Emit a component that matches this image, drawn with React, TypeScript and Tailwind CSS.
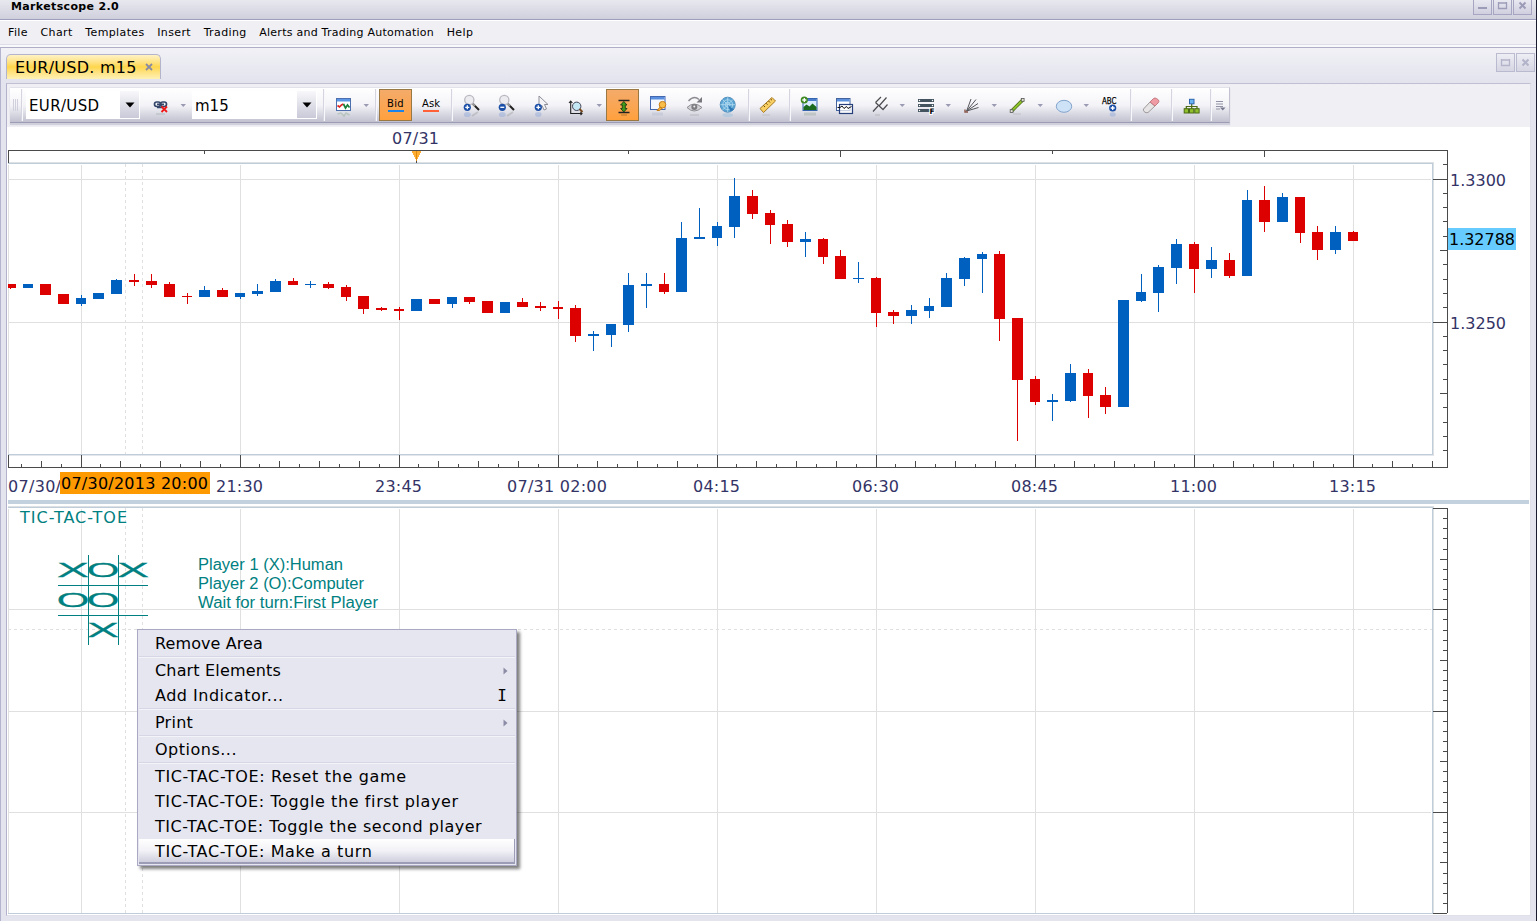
import type { ReactNode } from "react";
import clsx from "clsx";

const DARK = "#4a4a4a";
const GRID = "#e0e0e0";
const FRAME = "#bfcddb";
const LABEL = "#333366";
const UP = "#0060c0";
const DOWN = "#dc0000";
const TEAL = "#008080";

// [direction, high, body top, body bottom, low]
type Candle = [1 | -1, number, number, number, number];

const candles: Candle[] = [
  [-1, 284, 284, 288, 289], [1, 284, 284, 288, 288], [-1, 284, 284, 295, 295], [-1, 294, 294, 304, 304],
  [1, 295, 298, 304, 306], [1, 293, 293, 299, 299], [1, 279, 280, 294, 294], [-1, 274, 280, 282, 286],
  [-1, 274, 281, 285, 288], [-1, 282, 284, 297, 297], [-1, 293, 296, 297, 304], [1, 286, 290, 297, 297],
  [-1, 288, 290, 297, 297], [1, 293, 293, 297, 299], [1, 284, 291, 294, 296], [1, 279, 281, 292, 292],
  [-1, 278, 281, 285, 285], [1, 281, 284, 285, 288], [-1, 282, 284, 288, 289], [-1, 285, 287, 297, 301],
  [-1, 296, 296, 309, 314], [-1, 307, 308, 310, 311], [-1, 307, 309, 311, 320], [1, 299, 299, 311, 311],
  [-1, 299, 299, 304, 304], [1, 297, 297, 304, 308], [-1, 297, 297, 302, 304], [-1, 301, 301, 313, 313],
  [1, 302, 302, 313, 313], [-1, 298, 302, 307, 307], [-1, 302, 306, 308, 311], [-1, 301, 307, 309, 319],
  [-1, 305, 308, 336, 342], [1, 331, 334, 336, 351], [1, 324, 324, 335, 347], [1, 273, 285, 325, 332],
  [1, 273, 284, 286, 308], [-1, 273, 284, 292, 294], [1, 222, 238, 292, 292], [1, 208, 237, 239, 239],
  [1, 222, 226, 238, 246], [1, 178, 196, 227, 238], [-1, 190, 196, 214, 219], [-1, 210, 213, 225, 244],
  [-1, 220, 224, 242, 247], [1, 232, 239, 242, 257], [-1, 238, 239, 257, 264], [-1, 250, 256, 279, 279],
  [1, 262, 278, 279, 283], [-1, 277, 278, 313, 327], [-1, 310, 312, 316, 324], [1, 305, 310, 316, 324],
  [1, 298, 306, 311, 318], [1, 273, 278, 307, 307], [1, 257, 258, 279, 286], [1, 252, 254, 259, 293],
  [-1, 251, 254, 319, 341], [-1, 318, 318, 380, 441], [-1, 376, 379, 402, 405], [1, 394, 400, 402, 421],
  [1, 364, 373, 401, 402], [-1, 369, 373, 396, 418], [-1, 387, 395, 407, 414], [1, 300, 300, 407, 407],
  [1, 274, 292, 301, 302], [1, 265, 267, 293, 312], [1, 239, 244, 268, 284], [-1, 242, 244, 269, 293],
  [1, 247, 260, 269, 278], [-1, 253, 260, 276, 278], [1, 190, 200, 276, 276], [-1, 186, 200, 222, 232],
  [1, 193, 197, 222, 222], [-1, 197, 197, 233, 243], [-1, 226, 232, 250, 260], [1, 226, 232, 250, 254],
  [-1, 231, 232, 241, 241],
];

const gridX = [81, 240, 399, 558, 717, 876, 1035, 1194, 1353];

const timeLabels: [number, string, number][] = [
  [216, "21:30", 47], [375, "23:45", 47], [507, "07/31 02:00", 100], [693, "04:15", 47],
  [852, "06:30", 47], [1011, "08:45", 47], [1170, "11:00", 47], [1329, "13:15", 47],
];

const Px = ({ x, y, w = 1, h = 1, c = DARK }: { x: number; y: number; w?: number; h?: number; c?: string }) => (
  <rect x={x} y={y} width={w} height={h} fill={c} />
);

function CandleShape({ index, data }: { index: number; data: Candle }) {
  const [dir, high, top, bottom, low] = data;
  const thirds = index + 2;
  const center = 81 + ((index - 4) * 53) / 3;
  const x = Math.floor(center + 0.01);
  const c = dir > 0 ? UP : DOWN;
  return (
    <g>
      <Px x={x} y={high} h={low - high} c={c} />
      <Px x={x - 5} y={top} w={thirds % 3 === 0 ? 10 : 11} h={bottom - top} c={c} />
    </g>
  );
}

function PriceChart() {
  const bottomTicks = Array.from({ length: 72 }, (_, i) => i - 3);
  const rightTicks = Array.from({ length: 21 }, (_, i) => i - 1);
  return (
    <g shapeRendering="crispEdges">
      {gridX.map((x) => <Px key={x} x={x} y={165} h={289} c={GRID} />)}
      <Px x={8} y={165} h={289} c={GRID} />
      <Px x={8} y={179} w={1423} c={GRID} />
      <Px x={8} y={322} w={1423} c={GRID} />
      {[125.5, 142.5].map((x) => (
        <line key={x} x1={x} x2={x} y1={164} y2={454} stroke={GRID} strokeDasharray="3 3" />
      ))}

      {/* plot frame */}
      <Px x={8} y={162} w={1426} c="#dde1e4" />
      <Px x={8} y={163} w={1425} c={FRAME} />
      <Px x={1432} y={163} h={292} c={FRAME} />
      <Px x={1433} y={162} h={294} c="#dde1e4" />
      <Px x={8} y={454} w={1425} c={FRAME} />
      <Px x={8} y={455} w={1425} c="#e4e8ec" />

      {/* axes */}
      <Px x={8} y={150} w={1440} />
      <Px x={8} y={150} h={13} />
      <Px x={1447} y={150} h={318} />
      <Px x={8} y={467} w={1440} />
      <Px x={8} y={455} h={13} />
      {[204, 628, 1052].map((x) => <Px key={x} x={x} y={151} h={3} />)}
      {[840, 1264].map((x) => <Px key={x} x={x} y={151} h={6} />)}
      {bottomTicks.map((i) => {
        const h = i % 8 === 0 ? 12 : i % 2 === 0 ? 6 : 3;
        return <Px key={i} x={Math.floor(81 + i * 19.875)} y={467 - h} h={h} />;
      })}
      {rightTicks.map((i) => {
        const w = i % 10 === 0 ? 14 : i % 5 === 0 ? 7 : 4;
        return i === 20 ? null : <Px key={i} x={1447 - w} y={Math.floor(179 + i * 14.3)} w={w} />;
      })}

      <g clipPath="url(#plot)">
        {candles.map((c, i) => <CandleShape key={i} index={i} data={c} />)}
      </g>

      {/* day marker */}
      <path d="M412 151H421V153H420V155H419V157H418V159H417V161H416V159H415V157H414V155H413V153H412Z" fill="#ffae33" />
      <Px x={416} y={151} h={10} c="#e08a10" />
      <Px x={416} y={161} h={2} />

      <g fontSize="16" fill={LABEL}>
        <text x="392" y="144" textLength="47">07/31</text>
        <text x="1450" y="186">1.3300</text>
        <text x="1450" y="329">1.3250</text>
        <text x="8" y="492" textLength="53">07/30/</text>
        {timeLabels.map(([x, t, w]) => <text key={x} x={x} y="492" textLength={w}>{t}</text>)}
      </g>
      <rect x="1448" y="228" width="68" height="22" fill="#66ccff" />
      <text x="1449" y="245" fontSize="16" textLength="66">1.32788</text>
      <rect x="60" y="472" width="150" height="22" fill="#ff9900" />
      <text x="61" y="489" fontSize="16" textLength="147">07/30/2013 20:00</text>
    </g>
  );
}

const Mark = ({ x, y, children }: { x: number; y: number; children: "X" | "O" }) => (
  <text
    transform={`translate(${x} ${y}) scale(${children === "X" ? 2.4 : 2.1} 1)`}
    textAnchor="middle"
    fontSize="20"
    stroke={TEAL}
    strokeWidth=".25"
  >
    {children}
  </text>
);

function GamePane() {
  const ticks = Array.from({ length: 41 }, (_, i) => i);
  return (
    <g>
      <g shapeRendering="crispEdges">
        <rect x="8" y="500" width="1521" height="4" fill="#c3d0de" />
        {gridX.map((x) => <Px key={x} x={x} y={509} h={404} c={GRID} />)}
        <Px x={8} y={509} h={404} c={GRID} />
        {[609, 711, 812].map((y) => <Px key={y} x={8} y={y} w={1423} c={GRID} />)}
        {[125.5, 142.5].map((x) => (
          <line key={x} x1={x} x2={x} y1={508} y2={913} stroke={GRID} strokeDasharray="3 3" />
        ))}
        <line x1={8} x2={1433} y1={629.5} y2={629.5} stroke={GRID} strokeDasharray="3 3" />
        <Px x={8} y={506} w={1426} c="#dde1e4" />
        <Px x={8} y={507} w={1425} c={FRAME} />
        <Px x={1432} y={507} h={406} c={FRAME} />
        <Px x={1433} y={506} h={408} c="#dde1e4" />
        <Px x={8} y={913} w={1425} c={FRAME} />
        <Px x={1447} y={508} h={405} />
        {ticks.map((i) => {
          const w = i % 10 === 0 ? 14 : i % 5 === 0 ? 7 : 4;
          return <Px key={i} x={1447 - w} y={Math.round(508 + i * 10.125)} w={w} />;
        })}
        <Px x={88} y={555} h={90} c={TEAL} />
        <Px x={118} y={555} h={90} c={TEAL} />
        <Px x={58} y={585} w={90} c={TEAL} />
        <Px x={58} y={615} w={90} c={TEAL} />
      </g>
      <g fill={TEAL}>
        <text x="20" y="523" fontSize="16" textLength="107">TIC-TAC-TOE</text>
        <g fontFamily="'Liberation Sans', sans-serif">
          <Mark x={73} y={576.5}>X</Mark>
          <Mark x={103} y={576.5}>O</Mark>
          <Mark x={133} y={576.5}>X</Mark>
          <Mark x={73} y={606.5}>O</Mark>
          <Mark x={103} y={606.5}>O</Mark>
          <Mark x={103} y={636.5}>X</Mark>
          <g fontSize="16">
            <text x="198" y="570" textLength="145" lengthAdjust="spacingAndGlyphs">Player 1 (X):Human</text>
            <text x="198" y="589" textLength="166" lengthAdjust="spacingAndGlyphs">Player 2 (O):Computer</text>
            <text x="198" y="608" textLength="180" lengthAdjust="spacingAndGlyphs">Wait for turn:First Player</text>
          </g>
        </g>
      </g>
    </g>
  );
}

/* ---------- toolbar ---------- */

// every glyph is drawn around x = 0, y runs down the 36px bar
const Glyph = ({ children }: { children: ReactNode }) => (
  <svg width="32" height="36" viewBox="-16 0 32 36" className="shrink-0 overflow-visible">{children}</svg>
);

function Tool({ className, children }: { className?: string; children: ReactNode }) {
  return <div className={clsx("flex h-9 w-8 shrink-0 items-center justify-center", className)}><Glyph>{children}</Glyph></div>;
}

const Arrow = ({ className }: { className?: string }) => (
  <svg width="12" height="36" viewBox="-6 0 12 36" className={clsx("shrink-0", className)}>
    <path d="M-2.5 17H3L.25 20Z" fill="#9a9ab2" />
  </svg>
);

const Sep = ({ className }: { className?: string }) => (
  <div className={clsx("h-8 w-px shrink-0 self-center bg-[#d5d5e0] shadow-[1px_0_0_#f8f8fc]", className)} />
);

const Badge = ({ x, y, minus, color = "#1c50a8" }: { x: number; y: number; minus?: boolean; color?: string }) => (
  <g>
    <circle cx={x} cy={y} r="3.6" fill={color} />
    <path d={minus ? `M${x - 2} ${y}h4` : `M${x - 2} ${y}h4M${x} ${y - 2}v4`} stroke="#fff" strokeWidth="1.3" />
  </g>
);

const Lens = ({ minus }: { minus?: boolean }) => (
  <>
    <circle cx="-2.7" cy="13" r="4.6" fill="#ececf0" stroke="#b8b8c0" strokeWidth="1.3" />
    <path d="M1 17L7 23" stroke="#222" strokeWidth="2" />
    <path d="M1 17L3 19" stroke="#999" strokeWidth="2" />
    <Badge x={-4.7} y={20.3} minus={minus} />
    <ellipse cx="-4.7" cy="27.5" rx="3.4" ry="2.6" fill="#8fa6d6" opacity=".45" />
    <path d="M0 29L6 25" stroke="#888" strokeWidth="2" opacity=".3" />
  </>
);

function Combo({ label, className }: { label: string; className: string }) {
  return (
    <div className={clsx("flex h-7 shrink-0 bg-white text-[15px] leading-[30px]", className)}>
      <span className="grow pl-[3px]">{label}</span>
      <span className="flex w-[20px] items-center justify-center border-r border-b border-white bg-linear-to-b from-[#f8f8fb] to-[#c9c9d8]">
        <svg width="10" height="6"><path d="M.5 .5H9.5L5 5.5Z" /></svg>
      </span>
    </div>
  );
}

function Toolbar() {
  return (
    <div className="ml-[3px] mt-[3px] flex h-9 w-[1220px] items-center border-t border-r border-b border-t-[#e2e2ea] border-r-[#c2c2d0] border-b-[#9c9cb4] bg-linear-to-b from-white via-[#f4f4f8] to-[#c1c1d0] shadow-[0_2px_1px_#d0d0dc]">
      <div className="flex h-8 w-[11px] shrink-0 items-center justify-center gap-px">
        <i className="h-3 w-px bg-[#d0d0dc]" /><i className="h-3 w-px bg-[#d0d0dc]" /><i className="h-3 w-px bg-[#d0d0dc]" />
      </div>
      <Sep />
      <Combo label="EUR/USD" className="ml-[4px] w-[114px] tracking-[0.35px]" />
      <Tool className="ml-[5px]">
        <g fill="none" stroke="#34466a" strokeWidth="1.7">
          <rect x="-6.5" y="15" width="6" height="4.5" rx="2.2" />
          <rect x="-.5" y="15" width="6" height="4.5" rx="2.2" />
          <path d="M-4 17.3H3M-4 20.5H2" />
        </g>
        <path d="M.5 19.5L6 25M6 19.5L.5 25" stroke="#f01818" strokeWidth="1.8" />
        <path d="M-5 27H4" stroke="#9aa" strokeWidth="2" opacity=".3" />
      </Tool>
      <Arrow />
      <Combo label="m15" className="ml-[3px] w-[125px]" />
      <Sep className="ml-[6px]" />
      <Tool className="ml-[4px]">
        <rect x="-7.5" y="11.5" width="14" height="12" fill="#fff" stroke="#4d6fae" />
        <rect x="-7" y="12" width="13" height="2.5" fill="#5c96e6" />
        <path d="M-6.5 18.5L-4.5 20L-2.5 18L-.5 17" fill="none" stroke="#d22" strokeWidth="1.7" />
        <path d="M-.5 17L1.5 21L3.5 18L5.5 20.5" fill="none" stroke="#17803a" strokeWidth="1.7" />
        <path d="M-6.5 27L-3 26L0 29L2 26L5.5 28" fill="none" stroke="#8a8" opacity=".4" strokeWidth="1.5" />
      </Tool>
      <Arrow />
      <Sep className="ml-[3px]" />
      <div className="ml-[3px] flex h-8 w-[33px] shrink-0 flex-col items-center border border-[#9a7844] bg-linear-to-b from-[#f4ab69] to-[#ffa03c] pt-[8px] text-[10px] leading-[12px] tracking-[0.3px]">
        Bid<span className="h-[2px] w-4 shrink-0 bg-[#1b83ea]" />
      </div>
      <div className="ml-[2px] flex h-8 w-[34px] shrink-0 flex-col items-center pt-[9px] text-[10px] leading-[12px]">
        Ask<span className="h-[2px] w-4 shrink-0 bg-[#ff6038]" />
      </div>
      <Sep className="ml-[3px]" />
      <Tool className="ml-[4px]"><Lens /></Tool>
      <Tool className="ml-[3px]"><Lens minus /></Tool>
      <Tool className="ml-[3px]">
        <path d="M-3 9V21L0 18.5L2 23L4.5 22L2.5 17.5H6Z" fill="#f4f4f6" stroke="#8e8e98" />
        <Badge x={-3.7} y={20.3} />
        <ellipse cx="-3.7" cy="27.5" rx="3.2" ry="2.4" fill="#8fa6d6" opacity=".45" />
      </Tool>
      <Tool className="ml-[2px]">
        <path d="M-5.3 14V26.5H6M-7 16L-5.3 14L-3.6 16M4.5 25L6 26.5L4.5 28" fill="none" stroke="#222" strokeWidth="1.1" />
        <circle cx=".7" cy="19.3" r="4.2" fill="#c4e8f4" stroke="#445" />
        <path d="M3.5 22L6.5 25" stroke="#7a4a1e" strokeWidth="2" />
      </Tool>
      <Arrow className="ml-[1px]" />
      <div className="ml-[1px] flex h-8 w-[33px] shrink-0 items-center justify-center border border-[#9a7844] bg-linear-to-b from-[#f4ab69] to-[#ffa03c]">
        <Glyph>
          <path d="M-4.5 13.5H6.5M-4.5 25.5H6.5" stroke="#222" strokeWidth="1.4" />
          <path d="M.8 14.5L4 18H2.3V21.5H4L.8 25L-2.4 21.5H-.7V18H-2.4Z" fill="#3f9a1c" stroke="#1d3c12" strokeWidth=".9" />
          <path d="M-2 28H4" stroke="#a86a20" strokeWidth="2" opacity=".4" />
        </Glyph>
      </div>
      <Tool className="ml-[3px]">
        <rect x="-7.5" y="9.5" width="14.5" height="13" fill="#f4f8ff" stroke="#4468b0" />
        <rect x="-7" y="10" width="13.5" height="2.5" fill="#5a8fe0" />
        <path d="M3.5 18.5L-1 23.5H1.5L5 20.5" fill="#f5b23a" stroke="#c77d15" />
        <circle cx="4.5" cy="17.7" r="3.3" fill="#f9bd49" stroke="#c77d15" />
        <path d="M-6 27H5" stroke="#aab4cc" strokeWidth="3" opacity=".35" />
      </Tool>
      <Tool className="ml-[5px]">
        <path d="M-8 20.5Q-1 13.5 7 20.5Q-1 27.5-8 20.5Z" fill="#d2d2d6" stroke="#8c8c92" />
        <circle cx="-.7" cy="20" r="3" fill="#7c7c82" />
        <circle cx="-.7" cy="19.5" r="1" fill="#eee" />
        <path d="M-6.5 14Q-1 8 4 12.5" fill="none" stroke="#8c8c92" strokeWidth="1.5" />
        <path d="M7 10V15.5H1.5Z" fill="#77777d" />
        <path d="M-5 28H4" stroke="#999" strokeWidth="2" opacity=".25" />
      </Tool>
      <Tool className="ml-[1px]">
        <circle cx="-.3" cy="17.7" r="7.5" fill="#5aa5d4" stroke="#5490bd" />
        <g fill="none" stroke="#b5dcf0" strokeWidth=".8">
          <circle cx="-.3" cy="17.7" r="2.4" /><circle cx="-.3" cy="17.7" r="4.9" />
          <path d="M-7.5 17.7H7M-.3 10.5V25M-5.5 12.5L5 23M5 12.5L-5.5 23" />
        </g>
        <path d="M-.3 17.7L6 22.5L2.5 24.5Z" fill="#2e78b4" />
        <ellipse cx="-.3" cy="28" rx="5.5" ry="2" fill="#8ebddb" opacity=".4" />
      </Tool>
      <Sep className="ml-[4px]" />
      <Tool className="ml-[3px]">
        <path d="M-8 21.5L4 10.5L7.5 14L-4.5 25.5Z" fill="#f7cf62" stroke="#a87a24" />
        <path d="M-4.5 18.5L-3 20M-2 16.2L-.5 17.7M.5 14L2 15.5M2.7 12L4 13.3" stroke="#6b4a12" />
        <path d="M-6 28H2" stroke="#aaa" strokeWidth="2" opacity=".25" />
      </Tool>
      <Sep className="ml-[5px]" />
      <Tool className="ml-[3px]">
        <rect x="-6" y="11.5" width="14" height="12" fill="#d9ecff" stroke="#3564ae" />
        <rect x="-5.5" y="12" width="13" height="2" fill="#4a7dcc" />
        <path d="M-5.5 23V20L-2.5 17.5L.5 19.5L3.5 16.5L7.5 20V23Z" fill="#1a6a1f" />
        <Badge x={-4.7} y={13} color="#3f8a22" />
        <path d="M-5 27H7" stroke="#8fa68f" strokeWidth="3" opacity=".35" />
      </Tool>
      <Tool className="ml-[4px]">
        <rect x="-8.5" y="11.5" width="13.5" height="12" fill="#fff" stroke="#44639c" />
        <rect x="-8" y="12" width="12.5" height="2.5" fill="#5c8fdc" />
        <rect x="-5.5" y="17.5" width="13" height="9" fill="#fff" fillOpacity=".7" stroke="#27407c" strokeWidth="1.2" />
        <path d="M-7.5 20.5H-5L-3 19L-1 21.5L1.5 19.5L3 21.5L6.5 19.5" fill="none" stroke="#111" />
      </Tool>
      <Tool className="ml-[3px]">
        <path d="M-7 24.5L-2 19M-4.5 15.5L3.5 23M-4.5 15.5L1 10M-1 19L6.5 10.5M3 22.5L7.5 17.5" fill="none" stroke="#4c4c50" strokeWidth="1.2" />
        <path d="M-5 28H0" stroke="#999" strokeWidth="2" opacity=".25" />
      </Tool>
      <Arrow />
      <Tool className="ml-[2px]">
        {[12, 17, 22].map((y) => (
          <g key={y}>
            <rect x="-8" y={y} width="16" height="3" fill="#44545f" />
            <circle cx="-6.5" cy={y + 1.5} r=".7" fill="#fff" /><circle cx="6.5" cy={y + 1.5} r=".7" fill="#fff" />
          </g>
        ))}
        <text x="3.5" y="26.5" fontSize="7.5" fontWeight="bold" stroke="#fff" strokeWidth="2" paintOrder="stroke">F</text>
      </Tool>
      <Arrow />
      <Tool className="ml-[2px]">
        <path d="M-5.3 24L-1 12M-5.3 24L4 12.5M-5.3 24L6 16.5M-5.3 24L6.5 20.5" stroke="#55555c" />
        <path d="M-7 22.5V25H-4" fill="none" stroke="#8a5548" strokeWidth="1.4" />
      </Tool>
      <Arrow />
      <Tool className="ml-[1px]">
        <path d="M-5.3 24L5.7 13" stroke="#52701a" strokeWidth="3.4" />
        <path d="M-5.3 24L5.7 13" stroke="#8fc62a" strokeWidth="1.8" />
        <rect x="-6.8" y="22.7" width="2.8" height="2.8" fill="#e8e8d8" stroke="#555" strokeWidth=".8" />
        <rect x="4.3" y="11.5" width="2.8" height="2.8" fill="#e8e8d8" stroke="#555" strokeWidth=".8" />
        <path d="M-4 27H4" stroke="#999" strokeWidth="1.5" opacity=".25" />
      </Tool>
      <Arrow className="ml-[1px]" />
      <Tool className="ml-[2px]"><ellipse cy="19.3" rx="7.7" ry="6" fill="#cde2f6" stroke="#82a3cc" /></Tool>
      <Arrow />
      <Tool className="ml-[2px]">
        <text x="-8" y="16.5" fontSize="8.5" textLength="14.5" lengthAdjust="spacingAndGlyphs" stroke="#000" strokeWidth=".25">ABC</text>
        <Badge x={2.7} y={21} />
        <ellipse cx="2.7" cy="27.5" rx="3" ry="2.2" fill="#8fa6d6" opacity=".45" />
      </Tool>
      <Sep className="ml-[4px]" />
      <Tool className="ml-[4px]">
        <path d="M-7.5 22L-1 15L4 19L-3 25.5Q-5 26.5-7 24.5Q-8 23-7.5 22Z" fill="#e6e4e4" stroke="#a09a9a" />
        <path d="M-1 15L2.5 11.5Q4 10.5 5.5 11.5L7.5 13Q8.5 14.5 7 16L4 19Z" fill="#f09aa4" stroke="#c27a82" />
      </Tool>
      <Sep className="ml-[4px]" />
      <Tool className="ml-[4px]">
        <path d="M-.3 17V22M-5.7 22V19.5H5V22" fill="none" stroke="#4a6a14" strokeWidth="1.2" />
        <rect x="-2.5" y="12.3" width="4.5" height="4.5" fill="#6ab4f4" stroke="#2b66ae" />
        {[-7.8, -2.5, 2.8].map((x) => <rect key={x} x={x} y="21.7" width="4.3" height="4.3" fill="#8fc02c" stroke="#4a6a14" />)}
      </Tool>
      <Sep className="ml-[2px]" />
      <svg width="17" height="36" viewBox="-9 0 17 36" className="shrink-0">
        <path d="M-4 14.5H3M-4 17H3M-4 19.5H3M-4 22H0" stroke="#9292a6" />
        <path d="M0 20.5H5.5L2.75 23.5Z" fill="#77778f" />
      </svg>
    </div>
  );
}

/* ---------- window chrome ---------- */

function WinButton({ kind, faded }: { kind: "min" | "max" | "close"; faded?: boolean }) {
  return (
    <span className={clsx("flex h-[19px] w-[19px] items-center justify-center border border-[#a6a6c2] bg-linear-to-b from-[#eeeef5] to-[#cfcfdf]", faded && "opacity-70")}>
      <svg width="11" height="9" viewBox="0 0 11 9" fill="none" stroke="#9c9cb8" strokeWidth="2">
        {kind === "min" && <path d="M1 7H10" />}
        {kind === "max" && <path d="M1 2H10M1.5 1V7.5H9.5V1" strokeWidth="1.3" />}
        {kind === "close" && <path d="M2.5 1.5L8.5 7.5M8.5 1.5L2.5 7.5" />}
      </svg>
    </span>
  );
}

const menuBar = ["File", "Chart", "Templates", "Insert", "Trading", "Alerts and Trading Automation", "Help"];

type Entry = { label: string; spacing: string; submenu?: boolean; hotkey?: string; active?: boolean };

const groups: Entry[][] = [
  [{ label: "Remove Area", spacing: "tracking-[0.1px]" }],
  [
    { label: "Chart Elements", spacing: "tracking-[0.16px]", submenu: true },
    { label: "Add Indicator...", spacing: "tracking-[0.5px]", hotkey: "I" },
  ],
  [{ label: "Print", spacing: "tracking-[0.25px]", submenu: true }],
  [{ label: "Options...", spacing: "tracking-[0.5px]" }],
  [
    { label: "TIC-TAC-TOE: Reset the game", spacing: "tracking-[0.65px]" },
    { label: "TIC-TAC-TOE: Toggle the first player", spacing: "tracking-[0.6px]" },
    { label: "TIC-TAC-TOE: Toggle the second player", spacing: "tracking-[0.52px]" },
    { label: "TIC-TAC-TOE: Make a turn", spacing: "tracking-[0.62px]", active: true },
  ],
];

function ContextMenu() {
  return (
    <div className="absolute top-[629px] left-[137px] w-[380px] border border-[#a9a9c4] bg-[#e6e6f1] p-px shadow-[3px_3px_3px_rgba(0,0,0,0.5)]">
      {groups.map((group, g) => (
        <div key={g} className={clsx(g > 0 && "border-t border-[#d6d6e4]")}>
          <div className={clsx(g > 0 && "border-t border-[#f3f3fa]")}>
            {group.map((e) => (
              <div
                key={e.label}
                className={clsx(
                  "flex h-[25px] items-center pr-[7px] pl-[16px] text-[16px]",
                  e.active && "border-r border-b-2 border-[#9c9cb6] bg-linear-to-b from-white via-[#f2f2f7] to-[#cfcfde] pt-[2px]",
                )}
              >
                <span className={clsx("grow whitespace-nowrap", e.spacing)}>{e.label}</span>
                {e.submenu && <svg width="5" height="8"><path d="M.5 0.5L4.5 4L.5 7.5Z" fill="#8c8ca6" /></svg>}
                {e.hotkey && <span className="pr-px font-['DejaVu_Sans_Mono',monospace]">{e.hotkey}</span>}
              </div>
            ))}
          </div>
        </div>
      ))}
    </div>
  );
}

export default function App() {
  return (
    <div className="relative flex h-[921px] w-[1537px] flex-col overflow-hidden border-r border-[#1b1b30] bg-[#e4e4ef] font-['DejaVu_Sans',sans-serif] text-black">
      <header className="flex h-5 shrink-0 items-start justify-between border-b border-[#9f9fbc] bg-linear-to-b from-[#e8e8ef] to-[#cfd0dd] pr-[4px] pl-[11px]">
        <h1 className="-mt-px text-[11px] leading-[15px] font-bold tracking-[0.35px]">Marketscope 2.0</h1>
        <div className="-mt-[4px] flex gap-px">
          <WinButton kind="min" /><WinButton kind="max" /><WinButton kind="close" />
        </div>
      </header>
      <nav className="flex h-[25px] shrink-0 items-center gap-[12.6px] border-t border-b border-t-white border-b-[#dedee8] bg-[#f0eff4] pt-[2px] pl-[8px] text-[11px]">
        {menuBar.map((m) => (
          <span key={m} className={clsx("whitespace-nowrap", m.length > 10 ? "tracking-[0.25px]" : "tracking-[0.38px]")}>{m}</span>
        ))}
      </nav>
      <div className="h-[2px] shrink-0 bg-[#f8f8fb]" />
      <main className="flex grow flex-col border-t border-l border-t-[#aeaec8] border-l-[#b5b4ce]">
        <div className="flex h-[35px] shrink-0 items-start justify-between bg-linear-to-b from-[#f1f1f6] to-[#e3e3ee] pr-px pl-[5px]">
          <div className="mt-[6px] flex h-[25px] w-[155px] items-center rounded-t-[5px] border border-b-0 border-[#b4b4cc] bg-linear-to-b from-[#fff3c4] via-[#ffd64a] to-[#fff1b4] pl-[8px]">
            <span className="pt-[2px] text-[16px] tracking-[0.25px] whitespace-pre">EUR/USD. m15</span>
            <svg width="8" height="8" className="ml-[8px]" stroke="#8a8aa2" strokeWidth="1.8"><path d="M1 1L7 7M7 1L1 7" /></svg>
          </div>
          <div className="mt-[5px] flex gap-px">
            <WinButton kind="max" faded /><WinButton kind="close" faded />
          </div>
        </div>
        <section className="mr-[5px] ml-[5px] flex h-[833px] shrink-0 flex-col border border-t-[#c0c0d2] border-r-[#e0e0ea] border-b-[#e0e0ea] border-l-[#b2b2cc] bg-white">
          <div className="h-[43px] shrink-0 bg-[#f0eff4]"><Toolbar /></div>
          <svg width="1522" height="788" viewBox="7 127 1522 788" className="shrink-0">
            <defs><clipPath id="plot"><rect x="8" y="164" width="1424" height="290" /></clipPath></defs>
            <PriceChart />
            <GamePane />
          </svg>
        </section>
      </main>
      <ContextMenu />
    </div>
  );
}
